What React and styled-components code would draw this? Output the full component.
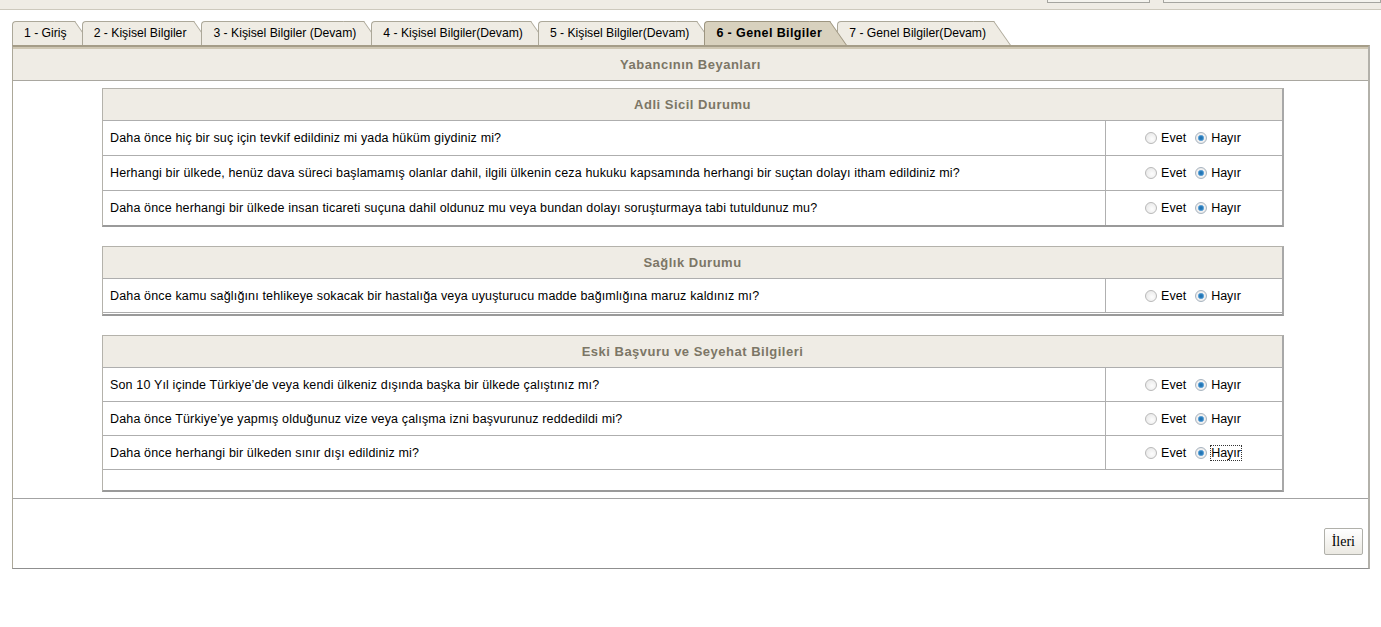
import React from "react";
import styled, { createGlobalStyle } from "styled-components";

const tabs = [
  { label: "1 - Giriş" },
  { label: "2 - Kişisel Bilgiler" },
  { label: "3 - Kişisel Bilgiler (Devam)" },
  { label: "4 - Kişisel Bilgiler(Devam)" },
  { label: "5 - Kişisel Bilgiler(Devam)" },
  { label: "6 - Genel Bilgiler", active: true },
  { label: "7 - Genel Bilgiler(Devam)" },
];

const sections = [
  {
    title: "Adli Sicil Durumu",
    rowHeight: 34,
    filler: 0,
    questions: [
      "Daha önce hiç bir suç için tevkif edildiniz mi yada hüküm giydiniz mi?",
      "Herhangi bir ülkede, henüz dava süreci başlamamış olanlar dahil, ilgili ülkenin ceza hukuku kapsamında herhangi bir suçtan dolayı itham edildiniz mi?",
      "Daha önce herhangi bir ülkede insan ticareti suçuna dahil oldunuz mu veya bundan dolayı soruşturmaya tabi tutuldunuz mu?",
    ],
  },
  {
    title: "Sağlık Durumu",
    rowHeight: 33,
    filler: 1,
    questions: [
      "Daha önce kamu sağlığını tehlikeye sokacak bir hastalığa veya uyuşturucu madde bağımlığına maruz kaldınız mı?",
    ],
  },
  {
    title: "Eski Başvuru ve Seyehat Bilgileri",
    rowHeight: 33,
    filler: 20,
    questions: [
      "Son 10 Yıl içinde Türkiye’de veya kendi ülkeniz dışında başka bir ülkede çalıştınız mı?",
      "Daha önce Türkiye’ye yapmış olduğunuz vize veya çalışma izni başvurunuz reddedildi mi?",
      "Daha önce herhangi bir ülkeden sınır dışı edildiniz mi?",
    ],
  },
];

export default function App() {
  return (
    <>
      <GlobalStyle />
      <TopBar>
        <TopButton $width={101} />
        <TopButton $width={216} />
      </TopBar>
      <Page>
        <TabRow>
          {tabs.map((t) => (
            <Tab key={t.label} $active={t.active}>
              {t.label}
            </Tab>
          ))}
        </TabRow>
        <Panel>
          <PanelHeader>Yabancının Beyanları</PanelHeader>
          <PanelBody>
            {sections.map((s, si) => (
              <Section key={s.title}>
                <SectionHeader>{s.title}</SectionHeader>
                {s.questions.map((q, qi) => {
                  const name = `q-${si}-${qi}`;
                  const focused = si === 2 && qi === 2;
                  return (
                    <Row key={name} $height={s.rowHeight}>
                      <Question>{q}</Question>
                      <Answer>
                        <Radio type="radio" name={name} id={`${name}-e`} />
                        <Label htmlFor={`${name}-e`}>Evet</Label>
                        <Radio type="radio" name={name} id={`${name}-h`} defaultChecked />
                        <Label htmlFor={`${name}-h`} $focused={focused}>
                          Hayır
                        </Label>
                      </Answer>
                    </Row>
                  );
                })}
                <Filler $height={s.filler} />
              </Section>
            ))}
          </PanelBody>
          <Footer>
            <NextButton>İleri</NextButton>
          </Footer>
        </Panel>
      </Page>
    </>
  );
}

const GlobalStyle = createGlobalStyle`
  body {
    margin: 0;
    background: #fff;
    font-family: "Liberation Sans", Arial, sans-serif;
    font-size: 12.5px;
    color: #000;
  }
`;

const TopBar = styled.div`
  height: 9px;
  background: #efece5;
  border-bottom: 1px solid #cdc9bd;
  display: flex;
  justify-content: flex-end;
  align-items: flex-start;
  gap: 13px;
  overflow: hidden;
`;

const TopButton = styled.div`
  width: ${(p) => p.$width}px;
  height: 2px;
  background: #f4f3ee;
  border: 1px solid #a5a5a0;
  border-top: none;
`;

const Page = styled.div`
  padding: 11px 11px 0 12px;
`;

const TabRow = styled.div`
  display: flex;
  align-items: flex-end;
  height: 24px;
`;

const Tab = styled.div`
  position: relative;
  z-index: ${(p) => (p.$active ? 2 : 0)};
  height: 23px;
  line-height: 23px;
  padding: 0 7px 0 11px;
  margin-right: 8px;
  white-space: nowrap;
  background: ${(p) => (p.$active ? "#d8d1be" : "#efece4")};
  border-top: 1px solid ${(p) => (p.$active ? "#9d9580" : "#aca899")};
  border-left: 1px solid ${(p) => (p.$active ? "#9d9580" : "#aca899")};
  border-top-left-radius: 4px;
  font-size: ${(p) => (p.$active ? "12.5px" : "12.2px")};
  font-weight: ${(p) => (p.$active ? "bold" : "normal")};
  letter-spacing: ${(p) => (p.$active ? "0.4px" : "0")};

  &::after {
    content: "";
    position: absolute;
    z-index: -1;
    top: -1px;
    bottom: 0;
    left: calc(100% - 20px);
    width: 20px;
    background: inherit;
    border-top: 1px solid ${(p) => (p.$active ? "#9d9580" : "#aca899")};
    border-right: 1px solid ${(p) => (p.$active ? "#9d9580" : "#aca899")};
    transform: skewX(35deg);
    transform-origin: top left;
  }
`;

const Panel = styled.div`
  position: relative;
  z-index: 3;
  border-top: 2px solid #a59d88;
  box-shadow: inset 0 2px 0 #cfc7b3;
  border-left: 1px solid #aca899;
  border-right: 2px solid #b3b1aa;
  border-bottom: 1px solid #8f8f8f;
  background: #fff;
`;

const PanelHeader = styled.div`
  height: 31px;
  margin-top: 2px;
  background: #efece5;
  border-bottom: 1px solid #a9a7a0;
  display: flex;
  align-items: center;
  justify-content: center;
  font-size: 13px;
  letter-spacing: 0.5px;
  font-weight: bold;
  color: #7c7666;
`;

const PanelBody = styled.div`
  display: flex;
  flex-direction: column;
  gap: 18px;
  padding: 7px 84px 6px 89px;
  border-bottom: 1px solid #a3a3a3;
`;

const Section = styled.div`
  border: 1px solid #b4b2ab;
  border-right: 2px solid #a8a8a8;
  border-bottom: 2px solid #9a9a9a;

  & + & {
    margin-top: 1px;
  }
`;

const SectionHeader = styled.div`
  height: 31px;
  background: #efece5;
  display: flex;
  align-items: center;
  justify-content: center;
  font-size: 13px;
  letter-spacing: 0.5px;
  font-weight: bold;
  color: #7c7666;
`;

const Row = styled.div`
  display: flex;
  height: ${(p) => p.$height}px;
  border-top: 1px solid #aeaeae;
`;

const Question = styled.div`
  flex: 1;
  display: flex;
  align-items: center;
  padding-left: 7px;
  border-right: 1px solid #b0b0b0;
  white-space: nowrap;
  letter-spacing: 0.15px;
`;

const Answer = styled.div`
  width: 176px;
  display: flex;
  align-items: center;
  justify-content: flex-end;
  padding-right: 41px;
  box-sizing: border-box;
`;

const Radio = styled.input`
  appearance: none;
  width: 12px;
  height: 12px;
  margin: 0 4px 0 0;
  border-radius: 50%;
  border: 1px solid #b9b9b9;
  background: radial-gradient(circle at 60% 60%, #fdfdfd 0%, #e3e3e3 100%);
  box-sizing: border-box;

  &:checked {
    border-color: #a8b4c0;
    background: radial-gradient(circle, #1f6aa8 0, #2d84c4 2px, #8fbbe0 3px, #f2f2f2 3.5px, #dedede 100%);
  }
`;

const Label = styled.label`
  margin-right: 9px;
  outline: ${(p) => (p.$focused ? "1px dotted #333" : "none")};
  line-height: 14px;

  &:last-child {
    margin-right: 0;
  }
`;

const Filler = styled.div`
  height: ${(p) => p.$height}px;
  border-top: ${(p) => (p.$height ? "1px solid #aeaeae" : "none")};
`;

const Footer = styled.div`
  display: flex;
  justify-content: flex-end;
  padding: 29px 5px 13px;
`;

const NextButton = styled.button`
  height: 27px;
  padding: 0 7px;
  font-family: "Liberation Serif", "Times New Roman", serif;
  font-size: 14px;
  color: #000;
  background: linear-gradient(#ffffff, #ebe9e2);
  border: 1px solid #b0b0aa;
  border-radius: 2px;
`;
